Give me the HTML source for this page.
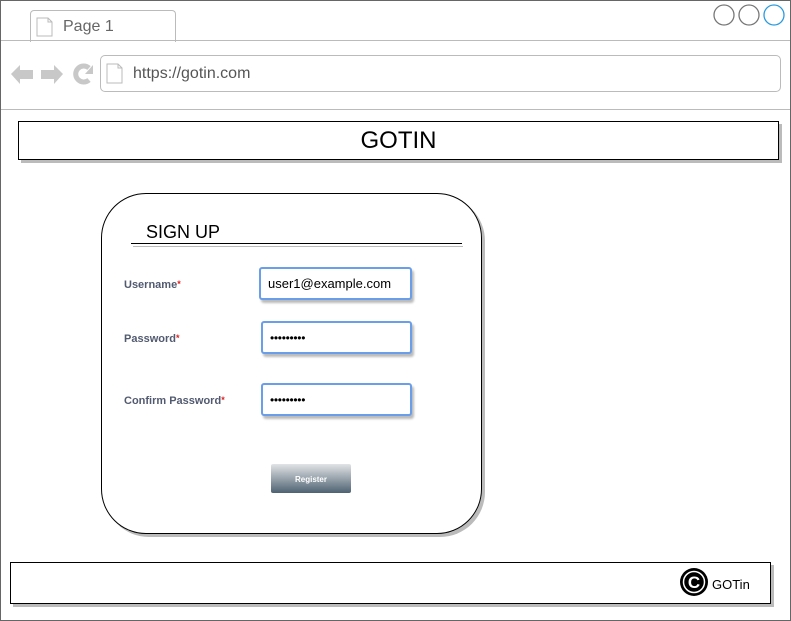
<!DOCTYPE html>
<html><head><style>
body{margin:0;width:791px;height:621px;position:relative;overflow:hidden;background:#fff;font-family:"Liberation Sans",sans-serif}
.a{position:absolute}
.inp{position:absolute;border:2px solid #6a9ee8;border-radius:3px;box-shadow:2px 3px 2px #bbb;background:#fff;font-size:13px;box-sizing:border-box;padding-left:7px;display:flex;align-items:center}
.lbl{position:absolute;font-size:11px;font-weight:bold;color:#525a70}
.lbl b{color:#d22;font-size:9px;vertical-align:top}
</style></head><body>
<div class="a" style="left:0;top:0;width:789px;height:619px;border:1px solid #666"></div>
<div class="a" style="left:30px;top:10px;width:144px;height:31px;border:1px solid #bbb;border-bottom:none;border-radius:4px 4px 0 0;background:#fff"></div>
<svg class="a" style="left:36px;top:17px" width="18" height="20"><path d="M1 1H12L16 5V19H1Z" fill="#fff" stroke="#bbb"/><path d="M12 1V5H16" fill="none" stroke="#bbb"/></svg>
<div class="a" style="left:63px;top:18px;font-size:16px;color:#666">Page 1</div>
<div class="a" style="left:1px;top:40px;width:789px;height:1px;background:#bbb"></div>
<div class="a" style="left:1px;top:109px;width:789px;height:1px;background:#bbb"></div>
<svg class="a" style="left:713px;top:4px" width="75" height="22"><circle cx="11" cy="11" r="10" fill="none" stroke="#777" stroke-width="1.3"/><circle cx="36" cy="11" r="10" fill="none" stroke="#777" stroke-width="1.3"/><circle cx="61" cy="11" r="10" fill="none" stroke="#2a9be0" stroke-width="1.3"/></svg>
<svg class="a" style="left:10px;top:62px" width="88" height="26">
<path d="M1 12L10 3V8H23V17H10V22Z" fill="#c8c8c8"/>
<path d="M53 12L44 3V8H31V17H44V22Z" fill="#c8c8c8"/>
<path d="M79 6A8 8 0 1 0 79 18" fill="none" stroke="#c8c8c8" stroke-width="5"/>
<path d="M83 3V12H75Z" fill="#c8c8c8"/>
</svg>
<div class="a" style="left:100px;top:55px;width:679px;height:35px;border:1px solid #bbb;border-radius:5px"></div>
<svg class="a" style="left:106px;top:63px" width="18" height="21"><path d="M1 1H12L16 5V20H1Z" fill="#fff" stroke="#bbb"/><path d="M12 1V5H16" fill="none" stroke="#bbb"/></svg>
<div class="a" style="left:133px;top:65px;font-size:16px;color:#555">https://gotin.com</div>
<div class="a" style="left:18px;top:121px;width:759px;height:37px;border:1px solid #000;box-shadow:3px 3px 0 #bbb;text-align:center;line-height:37px;font-size:24px">GOTIN</div>
<div class="a" style="left:101px;top:193px;width:379px;height:339px;border:1.3px solid #000;border-radius:45px;box-shadow:3px 3px 0 #bbb"></div>
<div class="a" style="left:146px;top:222px;font-size:18px">SIGN UP</div>
<div class="a" style="left:131px;top:243px;width:331px;height:1px;background:#000"></div>
<div class="a" style="left:133px;top:246px;width:330px;height:1px;background:#bbb"></div>
<div class="lbl" style="left:124px;top:279px">Username<b>*</b></div>
<div class="lbl" style="left:124px;top:333px">Password<b>*</b></div>
<div class="lbl" style="left:124px;top:395px">Confirm Password<b>*</b></div>
<div class="inp" style="left:259px;top:267px;width:153px;height:33px">user1@example.com</div>
<div class="inp" style="left:261px;top:321px;width:151px;height:33px;font-size:12px;letter-spacing:-0.3px">•••••••••</div>
<div class="inp" style="left:261px;top:383px;width:151px;height:33px;font-size:12px;letter-spacing:-0.3px">•••••••••</div>
<div class="a" style="left:271px;top:464px;width:80px;height:29px;border-radius:2px;background:linear-gradient(#e2e4e6,#4e6272);color:#fff;font-size:8px;text-align:center;line-height:31px;font-weight:bold">Register</div>
<div class="a" style="left:10px;top:562px;width:759px;height:40px;border:1px solid #000;box-shadow:3px 3px 0 #bbb"></div>
<svg class="a" style="left:679px;top:567px" width="30" height="30"><circle cx="15" cy="15" r="14" fill="#000"/><circle cx="15" cy="15" r="10.5" fill="none" stroke="#fff" stroke-width="1.5"/><text x="15" y="21" text-anchor="middle" font-size="17" font-weight="bold" fill="#fff" font-family="Liberation Sans">C</text></svg>
<div class="a" style="left:712px;top:577px;font-size:13px">GOTin</div>
</body></html>
